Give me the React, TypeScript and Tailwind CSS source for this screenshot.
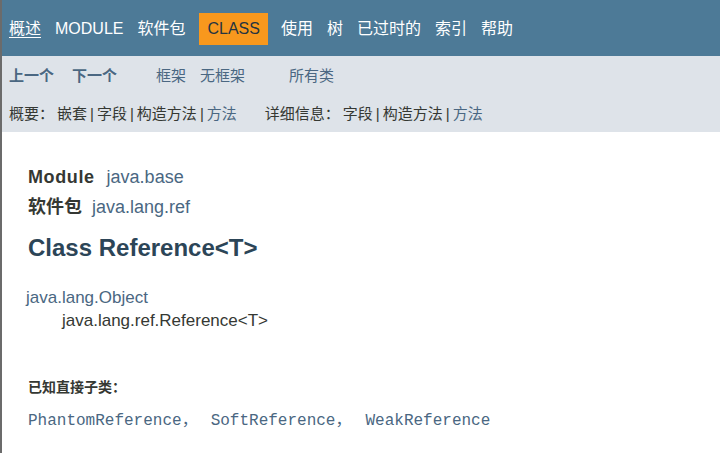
const TOP_NAV = ['概述', 'MODULE', '软件包', 'CLASS', '使用', '树', '已过时的', '索引', '帮助']

const sans = "font-['Liberation_Sans','Noto_Sans_CJK_SC',sans-serif]"

function TopNav() {
  return (
    <div className="h-[56px] bg-[#4d7a97] flex items-center pt-px">
      <ul className="flex items-center text-[16px] text-white">
        {TOP_NAV.map(item =>
          item === 'CLASS' ? (
            <li key={item} className="bg-[#f8981d] text-[#253441] px-2 h-[32px] flex items-center ml-[7px] mr-[6px]">
              {item}
            </li>
          ) : (
            <li key={item} className={'px-[7px] ' + (item === '概述' ? 'underline underline-offset-[3px]' : '')}>
              {item}
            </li>
          )
        )}
      </ul>
    </div>
  )
}

function Sep() {
  return <span className="mx-[3px] text-[#353833]">|</span>
}

function SubNav() {
  return (
    <div className="h-[76px] bg-[#dee3e9] text-[15px] pl-[7px] pt-[10px]">
      <div className="flex items-center h-[20px]">
        <span className="font-bold text-[#4a6782]">上一个</span>
        <span className="font-bold text-[#4a6782] ml-[18px]">下一个</span>
        <span className="text-[#4a6782] ml-[39px]">框架</span>
        <span className="text-[#4a6782] ml-[14px]">无框架</span>
        <span className="text-[#4a6782] ml-[44px]">所有类</span>
      </div>
      <div className="flex items-center h-[20px] mt-[18px] text-[#353833]">
        <span>概要：</span>
        <span className="ml-[3px]">嵌套</span>
        <Sep />
        <span>字段</span>
        <Sep />
        <span>构造方法</span>
        <Sep />
        <span className="text-[#4a6782]">方法</span>
        <span className="ml-[28px]">详细信息：</span>
        <span className="ml-[3px]">字段</span>
        <Sep />
        <span>构造方法</span>
        <Sep />
        <span className="text-[#4a6782]">方法</span>
      </div>
    </div>
  )
}

function Content() {
  return (
    <div className="pl-[26px] pt-[32px]">
      <div className="flex items-baseline text-[18px] h-[30px]">
        <span className="font-bold text-[#353833] tracking-[0.6px]">Module</span>
        <span className="ml-[12px] text-[#4a6782]">java.base</span>
      </div>
      <div className="flex items-baseline text-[18px] h-[30px]">
        <span className="font-bold text-[#353833]">软件包</span>
        <span className="ml-[10px] text-[#4a6782]">java.lang.ref</span>
      </div>
      <h2 className="text-[24px] font-bold text-[#2c4557] mt-[9px] leading-[30px]">Class Reference&lt;T&gt;</h2>
      <div className="mt-[23px] text-[17px] leading-[23px] -ml-[2px]">
        <div className="text-[#4a6782]">java.lang.Object</div>
        <div className="text-[#353833] pl-[36px]">java.lang.ref.Reference&lt;T&gt;</div>
      </div>
      <div className="mt-[45px] text-[14px] font-bold text-[#353833] leading-[20px]">已知直接子类：</div>
      <div className="mt-[14px] flex text-[16px] text-[#4a6782] font-['Liberation_Mono','Noto_Sans_CJK_SC',monospace] leading-[20px] whitespace-pre">
        <span>PhantomReference</span>
        <span className="mr-[13px]">，</span>
        <span>SoftReference</span>
        <span className="mr-[14px]">，</span>
        <span>WeakReference</span>
      </div>
    </div>
  )
}

export default function App() {
  return (
    <div className={`w-[720px] h-[453px] bg-white border-l-2 border-[#6b6b6b] overflow-hidden ${sans}`}>
      <TopNav />
      <SubNav />
      <Content />
    </div>
  )
}
